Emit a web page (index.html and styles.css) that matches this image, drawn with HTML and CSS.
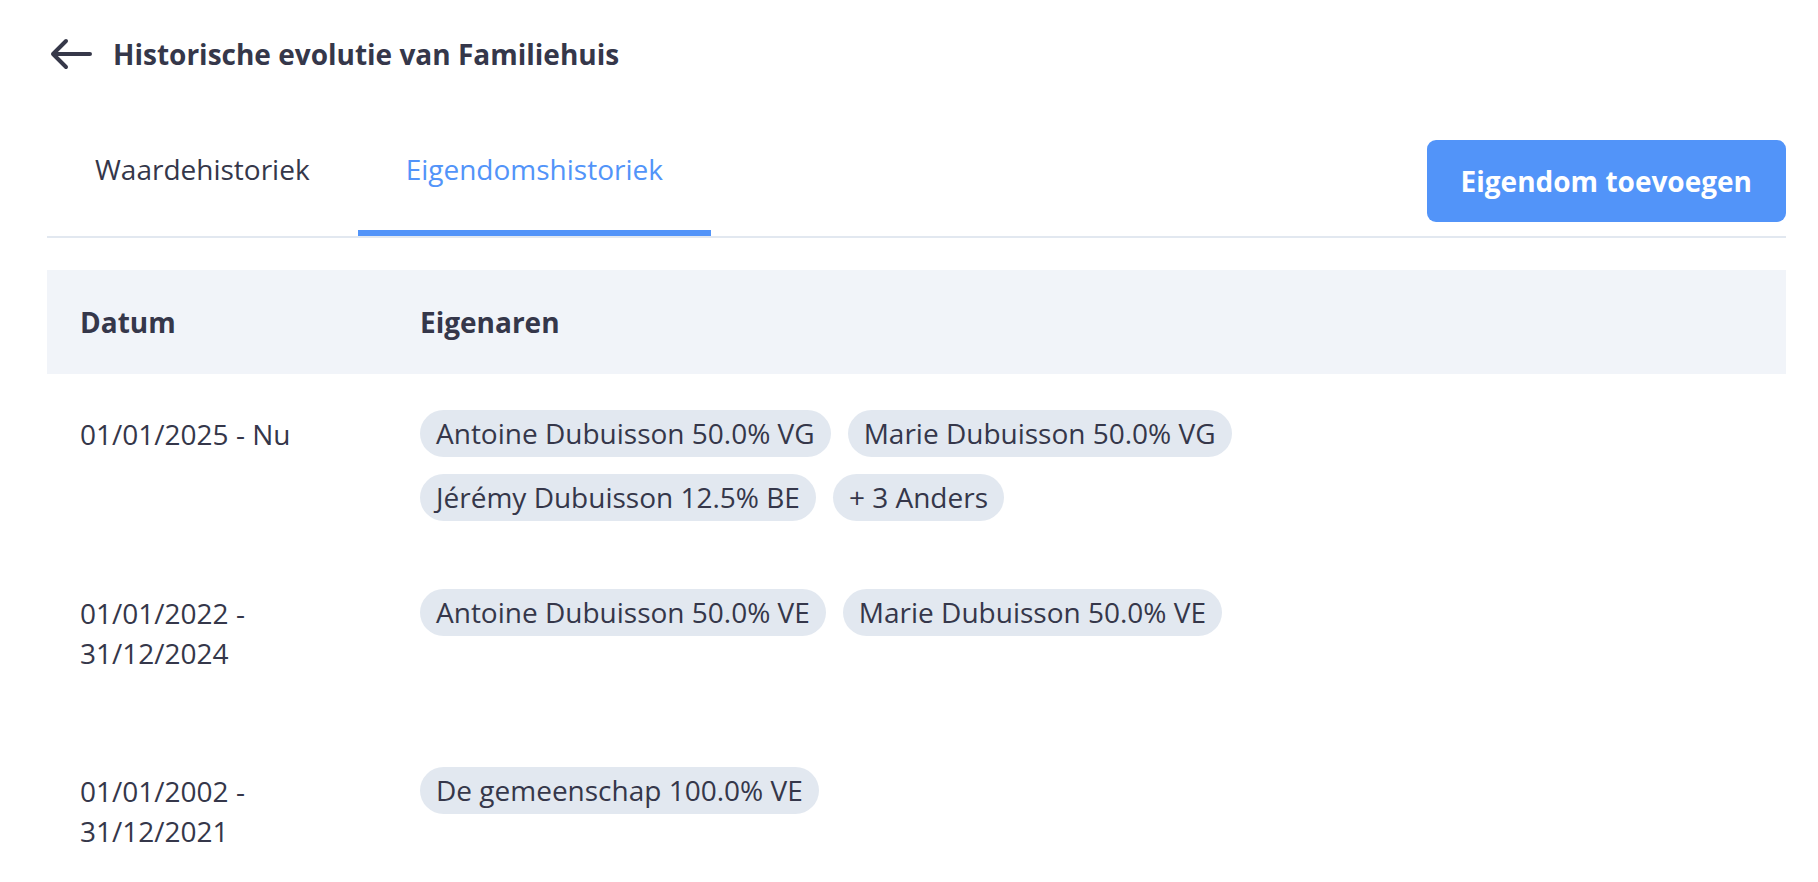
FILE: index.html
```html
<!DOCTYPE html>
<html lang="nl">
<head>
<meta charset="utf-8">
<title>Historische evolutie van Familiehuis</title>
<link rel="stylesheet" href="styles.css">
</head>
<body>
<div class="page">
  <div class="title-row">
    <svg class="back" width="42" height="32" viewBox="0 0 42 32" aria-hidden="true">
      <path d="M3 16 H40 M16 3 L3 16 L16 29" fill="none" stroke="#363849" stroke-width="4" stroke-linecap="round" stroke-linejoin="round"/>
    </svg>
    <h1 class="title">Historische evolutie van Familiehuis</h1>
  </div>

  <div class="tabbar">
    <div class="tabs">
      <div class="tab">Waardehistoriek</div>
      <div class="tab active">Eigendomshistoriek</div>
    </div>
    <button class="btn">Eigendom toevoegen</button>
  </div>

  <div class="table">
    <div class="thead">
      <div class="th">Datum</div>
      <div class="th">Eigenaren</div>
    </div>
    <div class="row">
      <div class="date">01/01/2025 - Nu</div>
      <div class="chips">
        <span class="chip">Antoine Dubuisson 50.0% VG</span>
        <span class="chip">Marie Dubuisson 50.0% VG</span>
        <span class="chip">Jérémy Dubuisson 12.5% BE</span>
        <span class="chip">+ 3 Anders</span>
      </div>
    </div>
    <div class="row">
      <div class="date">01/01/2022 -<br>31/12/2024</div>
      <div class="chips">
        <span class="chip">Antoine Dubuisson 50.0% VE</span>
        <span class="chip">Marie Dubuisson 50.0% VE</span>
      </div>
    </div>
    <div class="row">
      <div class="date">01/01/2002 -<br>31/12/2021</div>
      <div class="chips">
        <span class="chip">De gemeenschap 100.0% VE</span>
      </div>
    </div>
  </div>
</div>
</body>
</html>
```

FILE: styles.css
```css
* { box-sizing: border-box; }

html, body {
  margin: 0;
  padding: 0;
  background: #ffffff;
}

body {
  font-family: "Open Sans", "Noto Sans", sans-serif;
  font-size: 28px;
  line-height: 40px;
  color: #35374a;
}

.page {
  padding: 0 32px 0 47px;
}

.title-row {
  display: flex;
  align-items: center;
  gap: 21px;
  margin-top: 34px;
  height: 40px;
}

.back {
  display: block;
  margin-left: 3px;
  flex: none;
}

.title {
  margin: 0;
  font-size: 28px;
  line-height: 40px;
  font-weight: 700;
  color: #35374a;
}

.tabbar {
  display: flex;
  justify-content: space-between;
  align-items: flex-start;
  margin-top: 46px;
  border-bottom: 2px solid #e2e8f0;
}

.tabs {
  display: flex;
}

.tab {
  padding: 29px 48px 41px;
  border-bottom: 6px solid transparent;
  color: #35374a;
  font-weight: 400;
}

.tab.active {
  color: #5294f9;
  border-bottom-color: #5294f9;
}

.btn {
  margin-top: 20px;
  height: 82px;
  padding: 0 34px;
  border: none;
  border-radius: 9px;
  background: #5294f9;
  color: #ffffff;
  font-family: inherit;
  font-size: 28px;
  font-weight: 700;
  line-height: 82px;
}

.table {
  margin-top: 32px;
}

.thead {
  display: grid;
  grid-template-columns: 340px 1fr;
  padding: 32px 33px;
  background: #f1f4f9;
}

.th {
  font-weight: 700;
}

.row {
  display: grid;
  grid-template-columns: 340px 1fr;
  align-items: start;
  padding: 36px 33px 32px;
  min-height: 178px;
}

.date {
  padding-top: 4px;
}

.chips {
  display: flex;
  flex-wrap: wrap;
  column-gap: 17px;
  row-gap: 17px;
  max-width: 900px;
}

.chip {
  display: inline-block;
  height: 47px;
  line-height: 47px;
  padding: 0 16px;
  border-radius: 24px;
  background: #e2e8f0;
  color: #35374a;
  white-space: nowrap;
}
```
